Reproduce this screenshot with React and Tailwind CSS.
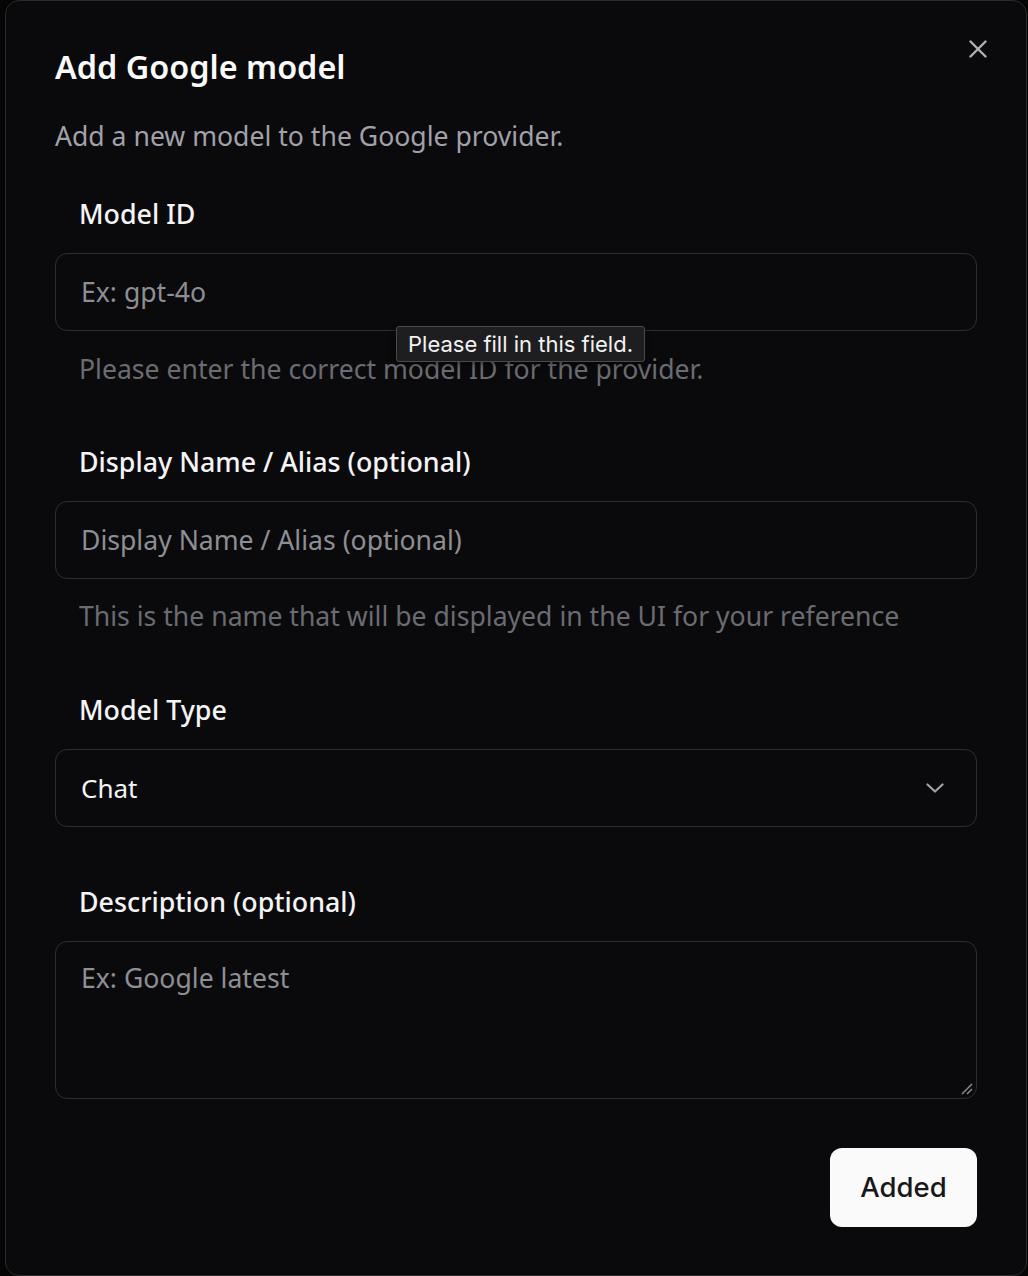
import React from "react";

const body = { fontFamily: '"Noto Sans", "Open Sans", sans-serif' };
const sys = { fontFamily: 'Inter, "Noto Sans", sans-serif' };

function Label({ children, className = "" }) {
  return (
    <div className={`pl-[24px] text-[26.8px] leading-[32px] font-medium text-[#f4f4f5] ${className}`}>
      {children}
    </div>
  );
}

function Helper({ children, className = "" }) {
  return (
    <div className={`pl-[24px] text-[26.6px] leading-[32px] text-[#6b6b72] ${className}`}>
      {children}
    </div>
  );
}

export default function App() {
  return (
    <div className="h-[1276px] w-[1028px] bg-[#050505] overflow-hidden" style={body}>
      <div className="relative ml-[5px] h-[1276px] w-[1022px] rounded-[14px] border border-[#2a2a2e] bg-[#0a0a0c] px-[49px] pt-[47px] flex flex-col">
        <button className="absolute right-[39px] top-[39px] h-[18px] w-[18px] text-[#b0b0b5]" aria-label="Close">
          <svg viewBox="0 0 18 18" width="18" height="18" fill="none" stroke="currentColor" strokeWidth="2.4" strokeLinecap="round">
            <path d="M1.5 1.5 L16.5 16.5 M16.5 1.5 L1.5 16.5" />
          </svg>
        </button>

        <h2 className="text-[32.4px] leading-[36px] font-semibold text-[#fafafa]">Add Google model</h2>
        <p className="mt-[36px] text-[26.6px] leading-[32px] text-[#a1a1aa]">Add a new model to the Google provider.</p>

        <Label className="mt-[46px]">Model ID</Label>
        <div className="relative">
          <input
            placeholder="Ex: gpt-4o"
            className="mt-[23px] h-[78px] w-full rounded-[12px] border border-[#2e2e32] bg-transparent px-[25px] text-[26.6px] text-[#fafafa] outline-none placeholder:text-[#8e8e95]"
            style={body}
          />
          <div
            className="absolute left-[341px] top-[96px] h-[36px] rounded-[3px] border border-[#4a4a4d] bg-[#1e1e20] px-[11px] text-[22px] leading-[34px] text-[#f2f2f2] shadow-[0_2px_6px_rgba(0,0,0,0.5)] z-10 whitespace-nowrap"
            style={sys}
          >
            Please fill in this field.
          </div>
        </div>
        <Helper className="mt-[22px]">Please enter the correct model ID for the provider.</Helper>

        <Label className="mt-[61px]">Display Name / Alias (optional)</Label>
        <input
          placeholder="Display Name / Alias (optional)"
          className="mt-[23px] h-[78px] w-full rounded-[12px] border border-[#2e2e32] bg-transparent px-[25px] text-[26.6px] text-[#fafafa] outline-none placeholder:text-[#8e8e95]"
          style={body}
        />
        <Helper className="mt-[21px]">This is the name that will be displayed in the UI for your reference</Helper>

        <Label className="mt-[62px]">Model Type</Label>
        <div className="mt-[23px] flex h-[78px] w-full items-center justify-between rounded-[12px] border border-[#2e2e32] pl-[25px] pr-[32px]">
          <span className="text-[26px] leading-[32px] text-[#f4f4f5]">Chat</span>
          <svg viewBox="0 0 18 10" width="18" height="10" fill="none" stroke="#a1a1aa" strokeWidth="2.2" strokeLinecap="round" strokeLinejoin="round">
            <path d="M1.5 1.5 L9 8.5 L16.5 1.5" />
          </svg>
        </div>

        <Label className="mt-[59px]">Description (optional)</Label>
        <div className="relative mt-[23px]">
          <textarea
            placeholder="Ex: Google latest"
            className="block h-[158px] w-full resize-none rounded-[12px] border border-[#2e2e32] bg-transparent px-[25px] py-[20px] text-[26.6px] leading-[32px] text-[#fafafa] outline-none placeholder:text-[#8e8e95]"
            style={body}
          />
          <svg className="absolute bottom-[4px] right-[4px]" width="12" height="12" viewBox="0 0 12 12" fill="none" stroke="#8a8a8f" strokeWidth="1.5">
            <path d="M1 11 L11 1 M6 11 L11 6" />
          </svg>
        </div>

        <div className="mt-[49px] flex justify-end">
          <button
            className="h-[79px] w-[147px] rounded-[12px] bg-[#fafafa] text-[27.5px] font-medium text-[#18181b]"
            style={sys}
          >
            Added
          </button>
        </div>
      </div>
    </div>
  );
}
